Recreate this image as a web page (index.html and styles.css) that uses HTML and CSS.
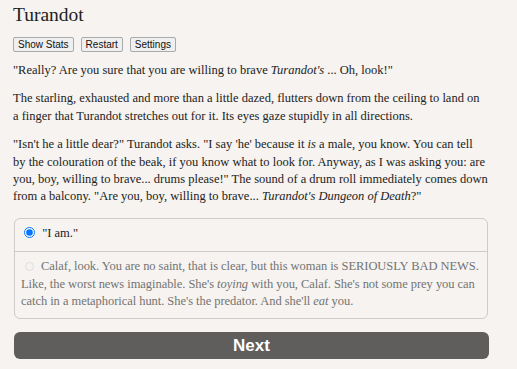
FILE: index.html
```html
<html>
<head>
  <title>Turandot</title>
  <link rel="stylesheet" href="styles.css">
</head>
<body>
<div class="page">
  <h1 class="title">Turandot</h1>
  <div class="toolbar">
    <button type="button">Show Stats</button>
    <button type="button">Restart</button>
    <button type="button">Settings</button>
  </div>
  <section class="passage">
    <p>"Really? Are you sure that you are willing to brave <em>Turandot's</em> ... Oh, look!"</p>
    <p>The starling, exhausted and more than a little dazed, flutters down from the ceiling to land on a finger that Turandot stretches out for it. Its eyes gaze stupidly in all directions.</p>
    <p>"Isn't he a little dear?" Turandot asks. "I say 'he' because it <em>is</em> a male, you know. You can tell by the colouration of the beak, if you know what to look for. Anyway, as I was asking you: are you, boy, willing to brave... drums please!" The sound of a drum roll immediately comes down from a balcony. "Are you, boy, willing to brave... <em>Turandot's Dungeon of Death</em>?"</p>
  </section>
  <form class="choices">
    <label class="choice">
      <input type="radio" name="choice" checked> "I am."
    </label>
    <label class="choice disabled">
      <input type="radio" name="choice" disabled> Calaf, look. You are no saint, that is clear, but this woman is SERIOUSLY BAD NEWS. Like, the worst news imaginable. She's <em>toying</em> with you, Calaf. She's not some prey you can catch in a metaphorical hunt. She's the predator. And she'll <em>eat</em> you.
    </label>
  </form>
  <button type="button" class="next">Next</button>
</div>
</body>
</html>
```
FILE: styles.css
```css
body {
  margin: 0;
  background-color: #f6f3f0;
  color: #222;
  font-family: "Liberation Serif", Georgia, serif;
}
.page {
  width: 475px;
  padding: 2px 13px 0 13px;
}
.title {
  margin: 0;
  font-size: 19.5px;
  font-weight: normal;
  line-height: 26px;
}
.toolbar {
  display: flex;
  gap: 7px;
  margin: 9px 0 10px 0;
}
.toolbar button {
  font-family: "Liberation Sans", Arial, sans-serif;
  font-size: 10px;
  line-height: 11px;
  padding: 1px 4px;
  border: 1px solid #aaa;
  border-radius: 2px;
  background: #efefef;
  color: #111;
}
.passage p {
  font-size: 12.5px;
  line-height: 17.4px;
  margin: 0 0 11px 0;
}
.choices {
  margin: 12px 0 13px 1px;
  border: 1px solid #ccc;
  border-radius: 6px;
}
.choice {
  display: block;
  font-size: 12.5px;
  line-height: 17.4px;
  padding: 6px 2px 9px 6px;
}
.choice + .choice {
  border-top: 1px solid #ccc;
  padding-top: 6px;
  padding-bottom: 8px;
}
.choice input {
  margin: 0 4px 0 3px;
  width: 11px;
  height: 11px;
  vertical-align: -1px;
}
.choice.disabled {
  color: #737373;
  letter-spacing: -0.05px;
}
.choice.disabled input {
  width: 9px;
  height: 9px;
  margin: 0 4px 0 4px;
  opacity: 0.5;
}
.next {
  display: block;
  width: 475px;
  margin-left: 1px;
  height: 27px;
  border: none;
  border-radius: 6px;
  background: #5f5e5c;
  color: #fff;
  font-family: "Liberation Sans", Arial, sans-serif;
  font-weight: bold;
  font-size: 17px;
}
```
